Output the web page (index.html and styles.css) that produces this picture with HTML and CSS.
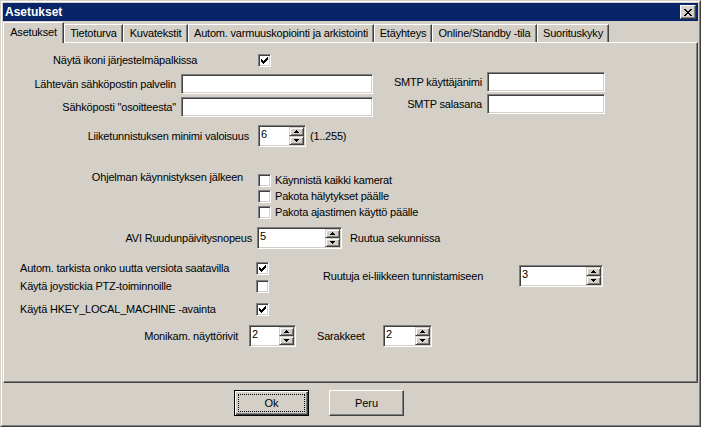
FILE: index.html
```html
<!DOCTYPE html>
<html lang="fi">
<head>
<meta charset="utf-8">
<title>Asetukset</title>
<link rel="stylesheet" href="styles.css">
</head>
<body>
<div class="window">
  <div class="frame">
    <div class="titlebar">
      <span class="title">Asetukset</span>
      <span class="close"><svg width="8" height="7" viewBox="0 0 8 7" shape-rendering="crispEdges"><path fill="#000" d="M0 0h2v1h-2z M6 0h2v1h-2z M1 1h2v1h-2z M5 1h2v1h-2z M2 2h4v1h-4z M3 3h2v1h-2z M2 4h4v1h-4z M1 5h2v1h-2z M5 5h2v1h-2z M0 6h2v1h-2z M6 6h2v1h-2z"/></svg></span>
    </div>

    <div class="tabs">
      <div class="tab active">Asetukset</div>
      <div class="tab">Tietoturva</div>
      <div class="tab">Kuvatekstit</div>
      <div class="tab">Autom. varmuuskopiointi ja arkistointi</div>
      <div class="tab">Etäyhteys</div>
      <div class="tab">Online/Standby -tila</div>
      <div class="tab">Suorituskyky</div>
    </div>

    <div class="panel">
      <div class="row row-tray">
        <span class="lbl lbl-tray">Näytä ikoni järjestelmäpalkissa</span>
        <span class="cb"><svg width="9" height="9" viewBox="0 0 9 9" shape-rendering="crispEdges"><path fill="#000" d="M7 1h1v1h-1z M6 2h2v1h-2z M1 3h1v1h-1z M5 3h3v1h-3z M1 4h2v1h-2z M4 4h3v1h-3z M1 5h5v1h-5z M2 6h3v1h-3z M3 7h1v1h-1z"/></svg></span>
      </div>

      <div class="row row-mail">
        <div class="mail-left">
          <div class="field"><span class="lbl lbl-mail">Lähtevän sähköpostin palvelin</span><span class="edit edit-mail"></span></div>
          <div class="field"><span class="lbl lbl-mail">Sähköposti "osoitteesta"</span><span class="edit edit-mail"></span></div>
        </div>
        <div class="mail-right">
          <div class="field"><span class="lbl lbl-smtp">SMTP käyttäjänimi</span><span class="edit edit-smtp"></span></div>
          <div class="field"><span class="lbl lbl-smtp">SMTP salasana</span><span class="edit edit-smtp"></span></div>
        </div>
      </div>

      <div class="row row-motion">
        <span class="lbl lbl-motion">Liiketunnistuksen minimi valoisuus</span>
        <span class="spin spin-motion"><span class="val">6</span><span class="arrows"><span class="sb"><svg width="5" height="3" viewBox="0 0 5 3" shape-rendering="crispEdges"><path fill="#000" d="M2 0h1v1h-1z M1 1h3v1h-3z M0 2h5v1h-5z"/></svg></span><span class="sb"><svg width="5" height="3" viewBox="0 0 5 3" shape-rendering="crispEdges"><path fill="#000" d="M0 0h5v1h-5z M1 1h3v1h-3z M2 2h1v1h-1z"/></svg></span></span></span>
        <span class="lbl hint">(1..255)</span>
      </div>

      <div class="row row-start">
        <span class="lbl lbl-start">Ohjelman käynnistyksen jälkeen</span>
        <div class="opts">
          <div class="opt"><span class="cb"></span><span class="lbl">Käynnistä kaikki kamerat</span></div>
          <div class="opt"><span class="cb"></span><span class="lbl">Pakota hälytykset päälle</span></div>
          <div class="opt"><span class="cb"></span><span class="lbl">Pakota ajastimen käyttö päälle</span></div>
        </div>
      </div>

      <div class="row row-avi">
        <span class="lbl lbl-avi">AVI Ruudunpäivitysnopeus</span>
        <span class="spin spin-avi"><span class="val">5</span><span class="arrows"><span class="sb"><svg width="5" height="3" viewBox="0 0 5 3" shape-rendering="crispEdges"><path fill="#000" d="M2 0h1v1h-1z M1 1h3v1h-3z M0 2h5v1h-5z"/></svg></span><span class="sb"><svg width="5" height="3" viewBox="0 0 5 3" shape-rendering="crispEdges"><path fill="#000" d="M0 0h5v1h-5z M1 1h3v1h-3z M2 2h1v1h-1z"/></svg></span></span></span>
        <span class="lbl lbl-fps">Ruutua sekunnissa</span>
      </div>

      <div class="row row-misc">
        <div class="misc-left">
          <div class="chk chk1"><span class="lbl lbl-chk">Autom. tarkista onko uutta versiota saatavilla</span><span class="cb"><svg width="9" height="9" viewBox="0 0 9 9" shape-rendering="crispEdges"><path fill="#000" d="M7 1h1v1h-1z M6 2h2v1h-2z M1 3h1v1h-1z M5 3h3v1h-3z M1 4h2v1h-2z M4 4h3v1h-3z M1 5h5v1h-5z M2 6h3v1h-3z M3 7h1v1h-1z"/></svg></span></div>
          <div class="chk chk2"><span class="lbl lbl-chk">Käytä joystickia PTZ-toiminnoille</span><span class="cb"></span></div>
          <div class="chk chk3"><span class="lbl lbl-chk">Käytä HKEY_LOCAL_MACHINE -avainta</span><span class="cb"><svg width="9" height="9" viewBox="0 0 9 9" shape-rendering="crispEdges"><path fill="#000" d="M7 1h1v1h-1z M6 2h2v1h-2z M1 3h1v1h-1z M5 3h3v1h-3z M1 4h2v1h-2z M4 4h3v1h-3z M1 5h5v1h-5z M2 6h3v1h-3z M3 7h1v1h-1z"/></svg></span></div>
        </div>
        <div class="misc-right">
          <span class="lbl lbl-still">Ruutuja ei-liikkeen tunnistamiseen</span>
          <span class="spin spin-still"><span class="val">3</span><span class="arrows"><span class="sb"><svg width="5" height="3" viewBox="0 0 5 3" shape-rendering="crispEdges"><path fill="#000" d="M2 0h1v1h-1z M1 1h3v1h-3z M0 2h5v1h-5z"/></svg></span><span class="sb"><svg width="5" height="3" viewBox="0 0 5 3" shape-rendering="crispEdges"><path fill="#000" d="M0 0h5v1h-5z M1 1h3v1h-3z M2 2h1v1h-1z"/></svg></span></span></span>
        </div>
      </div>

      <div class="row row-grid">
        <span class="lbl lbl-rows">Monikam. näyttörivit</span>
        <span class="spin spin-rows"><span class="val">2</span><span class="arrows"><span class="sb"><svg width="5" height="3" viewBox="0 0 5 3" shape-rendering="crispEdges"><path fill="#000" d="M2 0h1v1h-1z M1 1h3v1h-3z M0 2h5v1h-5z"/></svg></span><span class="sb"><svg width="5" height="3" viewBox="0 0 5 3" shape-rendering="crispEdges"><path fill="#000" d="M0 0h5v1h-5z M1 1h3v1h-3z M2 2h1v1h-1z"/></svg></span></span></span>
        <span class="lbl lbl-cols">Sarakkeet</span>
        <span class="spin spin-cols"><span class="val">2</span><span class="arrows"><span class="sb"><svg width="5" height="3" viewBox="0 0 5 3" shape-rendering="crispEdges"><path fill="#000" d="M2 0h1v1h-1z M1 1h3v1h-3z M0 2h5v1h-5z"/></svg></span><span class="sb"><svg width="5" height="3" viewBox="0 0 5 3" shape-rendering="crispEdges"><path fill="#000" d="M0 0h5v1h-5z M1 1h3v1h-3z M2 2h1v1h-1z"/></svg></span></span></span>
      </div>
    </div>

    <div class="buttons">
      <button class="btn default"><span class="focus">Ok</span></button>
      <button class="btn">Peru</button>
    </div>
  </div>
</div>
</body>
</html>
```

FILE: styles.css
```css
* { box-sizing: border-box; }
html, body { margin: 0; padding: 0; }
body {
  width: 701px;
  height: 427px;
  overflow: hidden;
  background: #d4d0c8;
  color: #000;
  font: 11px/13px "Liberation Sans", Arial, sans-serif;
}

.window {
  width: 701px;
  height: 427px;
  background: #d4d0c8;
  border: 1px solid;
  border-color: #d4d0c8 #404040 #404040 #d4d0c8;
}
.frame {
  height: 100%;
  border: 1px solid;
  border-color: #ffffff #808080 #808080 #ffffff;
  padding: 1px;
  display: flex;
  flex-direction: column;
}

/* title bar */
.titlebar {
  height: 18px;
  flex: none;
  background: #0a246a;
  display: flex;
  align-items: center;
  justify-content: space-between;
  padding: 0 2px;
}
.title {
  color: #fff;
  font: bold 12px/18px "Liberation Sans", Arial, sans-serif;
}
.close {
  width: 16px;
  height: 14px;
  background: #d4d0c8;
  border: 1px solid;
  border-color: #ffffff #404040 #404040 #ffffff;
  box-shadow: inset -1px -1px #808080;
  display: flex;
  align-items: center;
  justify-content: center;
  padding-top: 1px;
}
.close svg { display: block; }

/* tabs */
.tabs {
  display: flex;
  align-items: flex-end;
  height: 20px;
  margin-top: 1px;
  flex: none;
}
.tab {
  height: 18px;
  flex: none;
  background: #d4d0c8;
  border-top: 1px solid #fff;
  border-left: 1px solid #fff;
  border-right: 1px solid #404040;
  box-shadow: inset -1px 0 #808080;
  text-align: center;
  line-height: 17px;
  white-space: nowrap;
  letter-spacing: -0.2px;
}
.tab.active {
  height: 21px;
  margin-bottom: -1px;
  position: relative;
  z-index: 1;
  line-height: 18px;
}
.tab:nth-child(1) { width: 61px; }
.tab:nth-child(2) { width: 59px; }
.tab:nth-child(3) { width: 65px; }
.tab:nth-child(4) { width: 186px; }
.tab:nth-child(5) { width: 58px; }
.tab:nth-child(6) { width: 105px; }
.tab:nth-child(7) { width: 72px; }

/* panel */
.panel {
  height: 341px;
  flex: none;
  border: 1px solid;
  border-color: #ffffff #404040 #404040 #ffffff;
  box-shadow: inset -1px -1px #808080;
  display: flex;
  flex-direction: column;
}
.row { display: flex; align-items: center; flex: none; }
.lbl { white-space: nowrap; letter-spacing: -0.2px; }

/* common controls */
.cb {
  width: 13px;
  height: 13px;
  flex: none;
  background: #fff;
  border: 1px solid;
  border-color: #808080 #ffffff #ffffff #808080;
  box-shadow: inset 1px 1px #404040, inset -1px -1px #d4d0c8;
  padding: 1px;
  display: block;
}
.cb svg { display: block; }

.edit {
  height: 20px;
  flex: none;
  background: #fff;
  border: 1px solid;
  border-color: #808080 #ffffff #ffffff #808080;
  box-shadow: inset 1px 1px #404040, inset -1px -1px #d4d0c8;
}

.spin {
  height: 22px;
  flex: none;
  display: flex;
  background: #fff;
  border: 1px solid;
  border-color: #808080 #ffffff #ffffff #808080;
  box-shadow: inset 1px 1px #404040, inset -1px -1px #d4d0c8;
  padding: 1px;
}
.val {
  flex: 1;
  padding: 1px 0 0 1px;
  line-height: 13px;
}
.arrows {
  width: 15px;
  display: flex;
  flex-direction: column;
}
.sb {
  flex: 1;
  background: #d4d0c8;
  border: 1px solid;
  border-color: #d4d0c8 #404040 #404040 #d4d0c8;
  box-shadow: inset 1px 1px #fff, inset -1px -1px #808080;
  display: flex;
  align-items: center;
  justify-content: center;
}
.sb svg { display: block; }

/* row: tray icon */
.row-tray { margin-top: 11px; height: 13px; }
.lbl-tray { margin-left: 49px; width: 205px; }

/* row: mail */
.row-mail { margin-top: 5px; align-items: flex-start; }
.mail-left { margin-top: 2px; display: flex; flex-direction: column; gap: 3px; }
.mail-right { display: flex; flex-direction: column; gap: 2px; }
.field { display: flex; align-items: center; height: 20px; }
.lbl-mail { width: 172px; text-align: right; margin-right: 5px; }
.edit-mail { width: 192px; }
.lbl-smtp { width: 109px; text-align: right; margin-right: 5px; }
.edit-smtp { width: 118px; }

/* row: motion */
.row-motion { margin-top: 8px; height: 22px; }
.lbl-motion { width: 245px; text-align: right; margin-right: 9px; }
.spin-motion { width: 48px; }
.hint { margin-left: 4px; }

/* row: startup */
.row-start { margin-top: 27px; align-items: flex-start; }
.lbl-start { width: 239px; text-align: right; margin-top: -3px; margin-right: 15px; }
.opts { display: flex; flex-direction: column; gap: 3px; }
.opt { display: flex; align-items: center; height: 13px; gap: 4px; }

/* row: avi */
.row-avi { margin-top: 8px; height: 22px; }
.lbl-avi { width: 248px; text-align: right; margin-right: 5px; }
.spin-avi { width: 85px; }
.lbl-fps { margin-left: 8px; }

/* row: misc */
.row-misc { margin-top: 13px; align-items: flex-start; }
.misc-left { margin-left: 16px; display: flex; flex-direction: column; }
.chk { display: flex; align-items: center; height: 13px; }
.chk2 { margin-top: 5px; }
.chk3 { margin-top: 10px; }
.lbl-chk { width: 236px; }
.misc-right { margin-left: 54px; margin-top: 3px; display: flex; align-items: center; height: 22px; }
.lbl-still { width: 196px; }
.spin-still { width: 84px; }

/* row: grid */
.row-grid { margin-top: 9px; height: 22px; }
.lbl-rows { width: 234px; text-align: right; margin-right: 11px; }
.spin-rows { width: 47px; }
.lbl-cols { margin-left: 21px; width: 66px; }
.spin-cols { width: 49px; }

/* buttons */
.buttons {
  display: flex;
  gap: 20px;
  margin-top: 7px;
  padding-left: 231px;
  flex: none;
}
.btn {
  width: 75px;
  height: 26px;
  padding: 0;
  margin: 0;
  background: #d4d0c8;
  color: #000;
  font: 11px/13px "Liberation Sans", Arial, sans-serif;
  border: 1px solid;
  border-color: #ffffff #404040 #404040 #ffffff;
  box-shadow: inset -1px -1px #808080;
  border-radius: 0;
}
.btn.default {
  border-color: #000;
  box-shadow: inset 1px 1px #fff, inset -1px -1px #404040, inset -2px -2px #808080;
  padding: 3px;
}
.focus {
  display: flex;
  align-items: center;
  justify-content: center;
  height: 100%;
  border: 1px dotted #000;
}
```
